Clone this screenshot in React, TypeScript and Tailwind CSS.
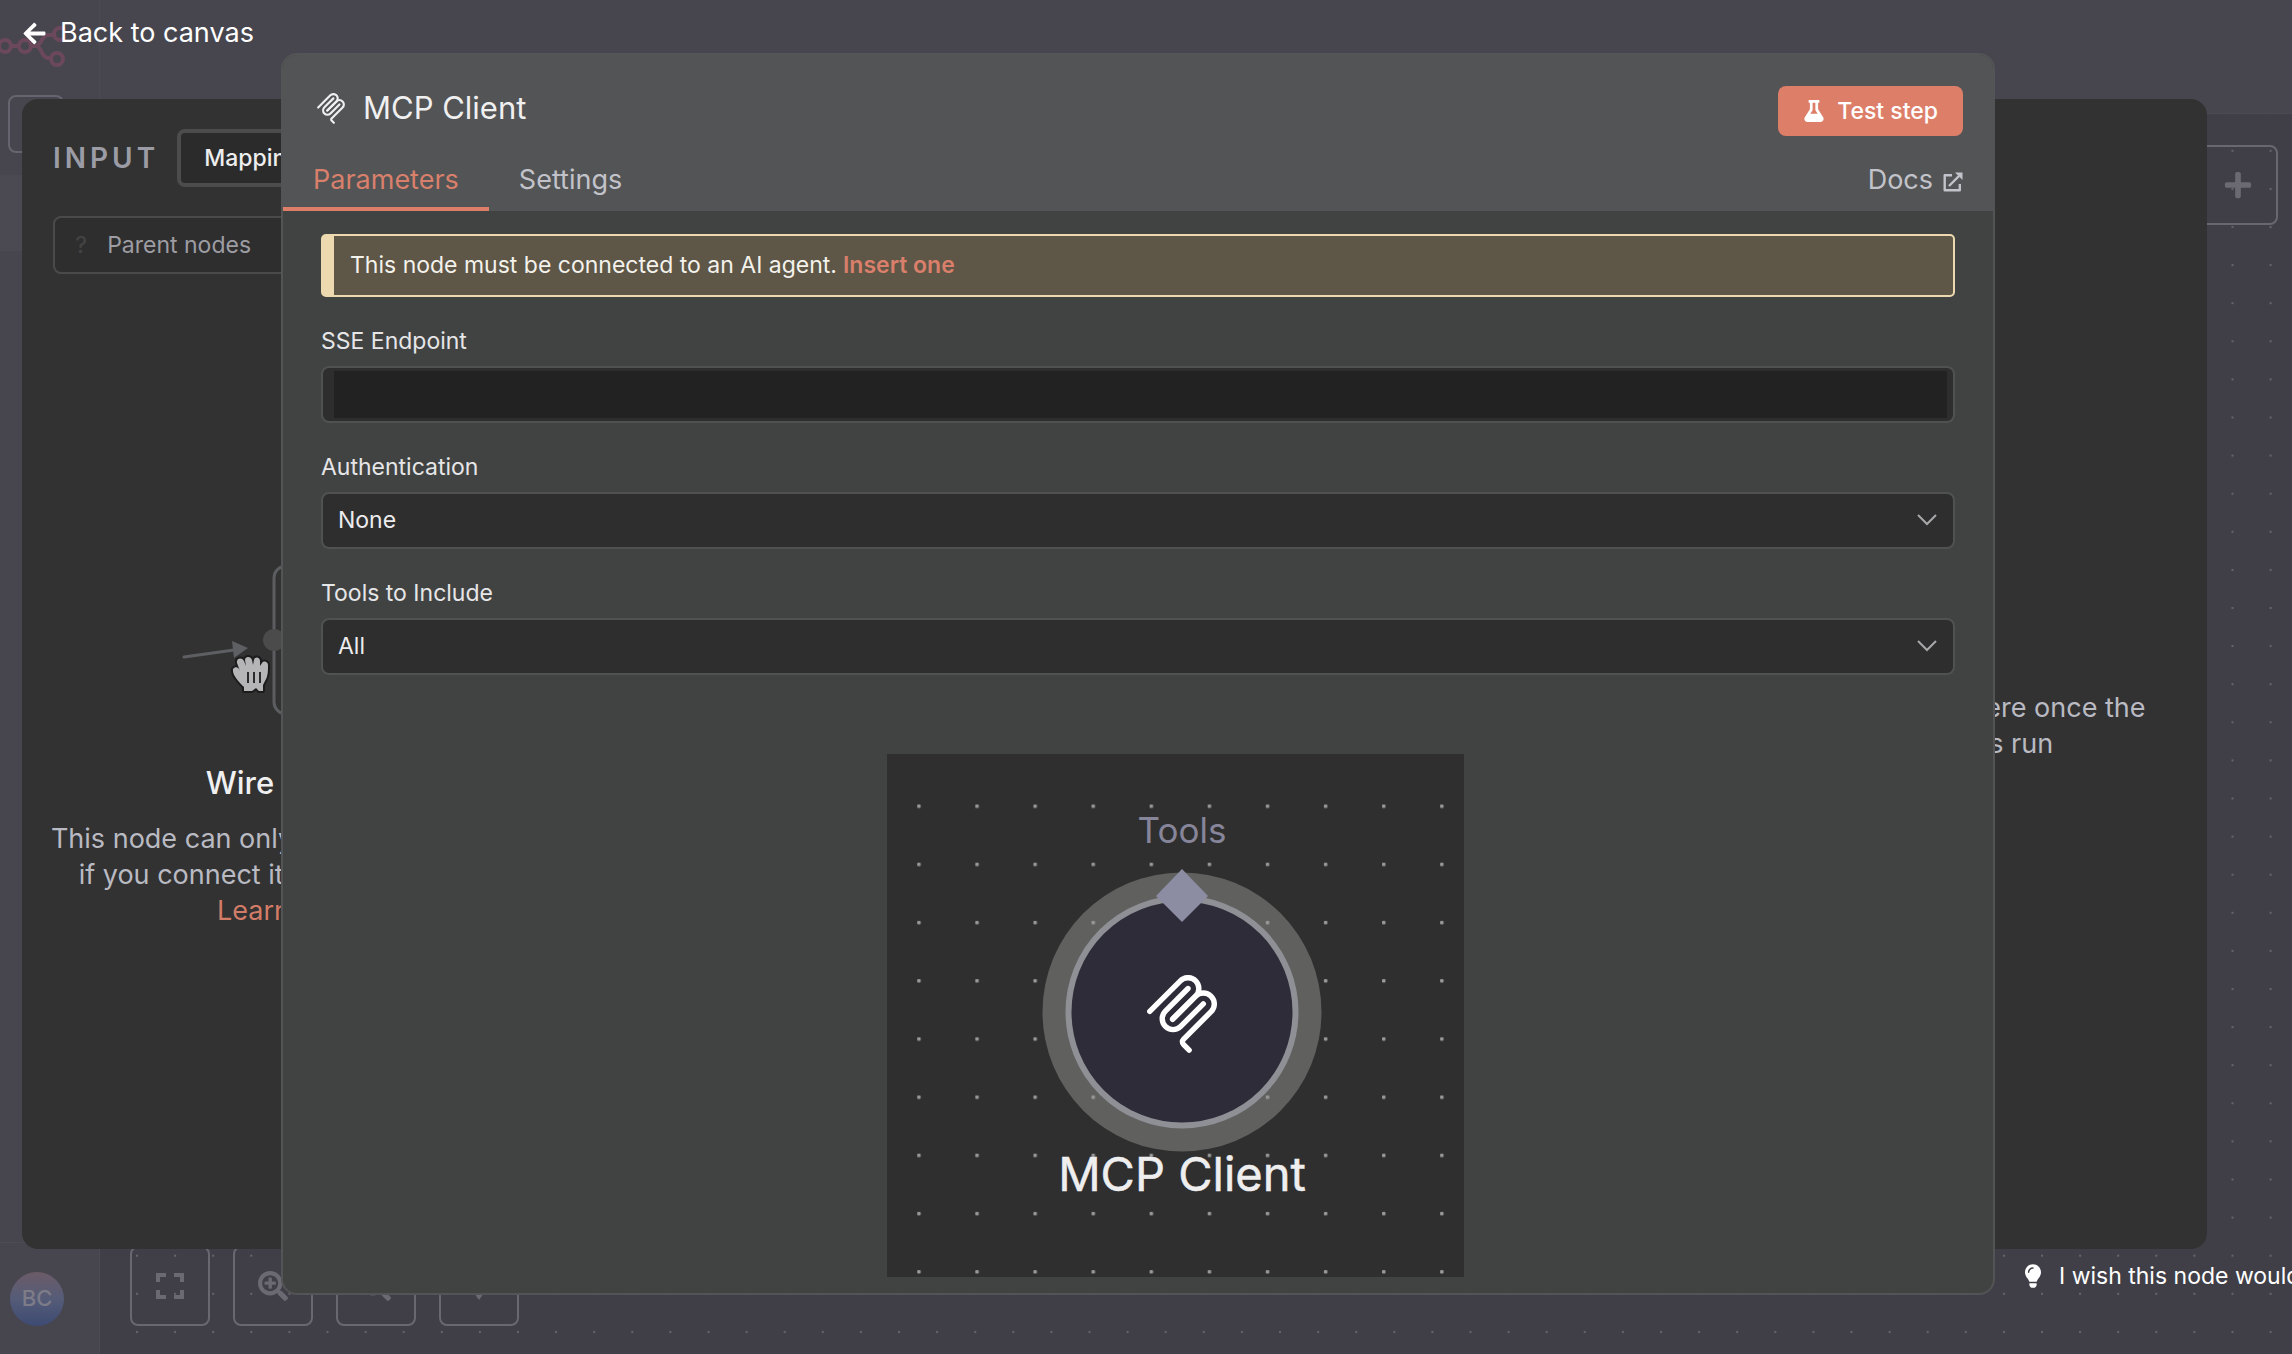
import type { ReactNode } from 'react'
import { FaArrowLeft, FaFlask, FaLightbulb, FaPlus, FaSearchMinus, FaSearchPlus } from 'react-icons/fa'

function McpIcon({ className }: { className: string }) {
  return (
    <svg viewBox="12 4 155 173" fill="none" stroke="currentColor" strokeWidth="12" strokeLinecap="round" className={className} aria-hidden="true">
      <path d="M18 84.8528L85.8822 16.9706C95.2548 7.59798 110.451 7.59798 119.823 16.9706C129.196 26.3431 129.196 41.5391 119.823 50.9117L68.5581 102.177" />
      <path d="M69.2652 101.47L119.823 50.9117C129.196 41.5391 144.392 41.5391 153.765 50.9117L154.118 51.2652C163.491 60.6378 163.491 75.8338 154.118 85.2063L92.7248 146.6C89.6006 149.724 89.6006 154.789 92.7248 157.913L105.331 170.52" />
      <path d="M102.853 33.9411L52.6482 84.1457C43.2756 93.5183 43.2756 108.714 52.6482 118.087C62.0208 127.459 77.2167 127.459 86.5893 118.087L136.794 67.8822" />
    </svg>
  )
}

function ExternalIcon() {
  return (
    <svg viewBox="0 0 20 20" fill="none" stroke="currentColor" strokeWidth="2.4" className="mt-1 size-5" aria-hidden="true">
      <path d="M9 3.2H1.7V18.3H16.8V12" strokeLinejoin="round" />
      <path d="M6 14L16 4" />
      <path d="M12 0.5H19.5V8Z" fill="currentColor" stroke="none" />
    </svg>
  )
}

function ExpandIcon() {
  return (
    <svg viewBox="0 0 28 28" fill="none" stroke="currentColor" strokeWidth="4" className="size-7" aria-hidden="true">
      <path d="M2 10V3H10M18 3H26V10M26 18V25H18M10 25H2V18" />
    </svg>
  )
}

function TidyIcon() {
  return (
    <svg viewBox="0 0 28 28" fill="currentColor" className="size-7" aria-hidden="true">
      <path d="M4 2H24V14L14 28L4 14Z" />
    </svg>
  )
}

function CanvasDots() {
  return (
    <svg className="absolute inset-0 size-full" aria-hidden="true">
      <defs>
        <pattern id="canvas-dots" x="36" y="35.8" width="38.1" height="38.1" patternUnits="userSpaceOnUse">
          <rect x="0" y="0" width="2" height="2" fill="#66656d" />
        </pattern>
      </defs>
      <rect width="100%" height="100%" fill="url(#canvas-dots)" />
    </svg>
  )
}

function CanvasButton({ label, children }: { label: string; children: ReactNode }) {
  return (
    <button type="button" aria-label={label} className="flex size-20 items-center justify-center rounded-lg border-2 border-[#696870] text-[#6b6a72]">
      {children}
    </button>
  )
}

function Workspace() {
  return (
    <div className="flex min-h-screen bg-[#403f48]">
      <aside className="flex w-[100px] shrink-0 flex-col justify-between border-r border-[#4b4a53] bg-[#47464f]">
        <div className="pt-6">
          <svg viewBox="0 0 66 54" fill="none" stroke="#6b485b" strokeWidth="4" className="h-[54px] w-[66px]" aria-hidden="true">
            <circle cx="5" cy="22" r="6" />
            <circle cx="25" cy="22" r="6" />
            <path d="M11 22H19M31 22H36C41 22 42 11 48 11H54M36 22C42 22 41 34 48 34H51" />
            <circle cx="60" cy="10" r="6" />
            <circle cx="57" cy="35" r="6" />
          </svg>
          <div className="mt-[17px] ml-2 h-[58px] w-14 rounded-lg border-2 border-[#66656f]" />
          <div className="mt-[22px] h-[76px] bg-[#4b4a52]" />
        </div>
        <div className="flex h-28 items-center border-t border-[#4d4c55] pl-[10px]">
          <div className="flex size-[54px] items-center justify-center rounded-full bg-linear-to-b from-[#6b5b68] via-[#555c78] to-[#3d4a72] text-[22px] font-medium text-[#7d7c88]">BC</div>
        </div>
      </aside>
      <div className="flex grow flex-col">
        <div className="h-[114px] border-b border-[#4b4a53] bg-[#47464f]" />
        <div className="relative flex grow flex-col items-end justify-between pt-[31px] pr-[14px] pb-7">
          <CanvasDots />
          <CanvasButton label="Add node">
            <FaPlus className="size-[30px]" />
          </CanvasButton>
          <div className="flex gap-[23px] self-start pl-[30px]">
            <CanvasButton label="Fit to view">
              <ExpandIcon />
            </CanvasButton>
            <CanvasButton label="Zoom in">
              <FaSearchPlus className="size-[30px]" />
            </CanvasButton>
            <CanvasButton label="Zoom out">
              <FaSearchMinus className="size-[30px]" />
            </CanvasButton>
            <CanvasButton label="Tidy up">
              <TidyIcon />
            </CanvasButton>
          </div>
        </div>
      </div>
    </div>
  )
}

function WireIllustration() {
  return (
    <svg viewBox="0 0 200 160" className="h-40 w-[200px] overflow-visible" fill="none" aria-hidden="true">
      <rect x="84" y="6" width="104" height="148" rx="12" stroke="#5c5d60" strokeWidth="3" />
      <circle cx="84" cy="80" r="11" fill="#4b4b4b" />
      <path d="M-6 97L44 90" stroke="#5e5f62" strokeWidth="3" strokeLinecap="round" />
      <path d="M42 81L58 88L44 98Z" fill="#5e5f62" />
      <path
        d="M43 109C45 106 49 107 50 111L47 103C46 98 52 97 54 101L56 106L55 100C55 96 61 96 62 100L63 105L64 100C65 96 70 97 70 101V106L72 103C74 100 78 102 78 105C78 112 78 116 75 121L73 125V131H69L66 128L62 131H54V127C49 122 42 115 43 109Z"
        fill="#b5b4b6"
        stroke="#1c1c1c"
        strokeWidth="4"
        strokeLinejoin="round"
        paintOrder="stroke"
      />
      <path d="M58 112V123M64 112V123M70 112V123" stroke="#2b2b2b" strokeWidth="2" />
    </svg>
  )
}

function InputPanel() {
  return (
    <section className="flex w-[536px] flex-col px-[31px] pt-[30px]">
      <div className="flex items-center gap-[18px]">
        <h2 className="text-[28px] font-semibold tracking-[4px] text-[#9b9ca5]">INPUT</h2>
        <div className="flex rounded-lg border-4 border-[#4c4c4c] bg-[#2b2b2b]">
          <button type="button" className="px-[23px] py-2 text-[23px] leading-[34px] font-medium text-[#eeeeef]">Mapping</button>
        </div>
      </div>
      <button type="button" className="mt-[29px] flex h-[58px] items-center gap-5 rounded-lg border-2 border-[#4a4a4a] bg-[#2e2e2e] pl-5 text-[23px] text-[#9d9da3]">
        <span className="font-medium text-[#434343]">?</span>
        Parent nodes
      </button>
      <div className="mt-[286px] flex flex-col items-center text-center">
        <WireIllustration />
        <h3 className="mt-[43px] text-[31px] leading-10 font-medium text-[#f0f0f1]">Wire me up</h3>
        <p className="mt-[18px] text-[27px] leading-9 whitespace-nowrap text-[#b9bac2]">
          This node can only receive input data
          <br />
          if you connect it to another node.
          <br />
          <a href="#learn" className="text-[#d37c68]">Learn more</a>
        </p>
      </div>
    </section>
  )
}

function OutputPanel() {
  return (
    <section className="flex w-[540px] items-center justify-center">
      <p className="pt-[103px] text-center text-[27px] leading-9 whitespace-nowrap text-[#b9bac2]">
        Output will appear here once the
        <br />
        parent node is run
      </p>
    </section>
  )
}

function SelectField({ id, label, value }: { id: string; label: string; value: string }) {
  return (
    <div className="flex flex-col gap-2">
      <label htmlFor={id} className="text-[23px] leading-[34px] text-[#e6e6e8]">{label}</label>
      <div className="relative">
        <select id={id} className="h-[57px] w-full appearance-none rounded-lg border-2 border-[#505151] bg-[#2e2e2e] px-[15px] text-[23px] text-[#ececee]">
          <option>{value}</option>
        </select>
        <svg viewBox="0 0 20 12" fill="none" stroke="#a8a8ac" strokeWidth="2" className="pointer-events-none absolute top-[22px] right-[18px] h-3 w-5" aria-hidden="true">
          <path d="M1 1L10 10L19 1" />
        </svg>
      </div>
    </div>
  )
}

function NodePreview() {
  return (
    <svg viewBox="0 0 577 523" className="h-[523px] w-[577px] bg-[#2f2f2f]" role="img" aria-label="MCP Client node">
      <defs>
        <pattern id="preview-dots" x="30.2" y="50.5" width="58.1" height="58.2" patternUnits="userSpaceOnUse">
          <rect width="3.5" height="3.5" rx="1" fill="#999999" />
        </pattern>
      </defs>
      <circle cx="295" cy="258" r="139.5" fill="#60615f" />
      <rect width="577" height="523" fill="url(#preview-dots)" />
      <circle cx="295" cy="258" r="113.5" fill="#2d2c38" stroke="#8f8f96" strokeWidth="6" />
      <path d="M295 115L321 142L295 168L269 142Z" fill="#8c8ca3" />
      <text x="295" y="89" textAnchor="middle" fontSize="35" fill="#86859a">Tools</text>
      <text x="295" y="437" textAnchor="middle" fontSize="47" fill="#eeeeef" stroke="#eeeeef" strokeWidth="0.5">MCP Client</text>
      <svg x="260" y="221" width="70" height="78" viewBox="12 4 155 173" fill="none" stroke="#ffffff" strokeWidth="12" strokeLinecap="round">
        <path d="M18 84.8528L85.8822 16.9706C95.2548 7.59798 110.451 7.59798 119.823 16.9706C129.196 26.3431 129.196 41.5391 119.823 50.9117L68.5581 102.177" />
        <path d="M69.2652 101.47L119.823 50.9117C129.196 41.5391 144.392 41.5391 153.765 50.9117L154.118 51.2652C163.491 60.6378 163.491 75.8338 154.118 85.2063L92.7248 146.6C89.6006 149.724 89.6006 154.789 92.7248 157.913L105.331 170.52" />
        <path d="M102.853 33.9411L52.6482 84.1457C43.2756 93.5183 43.2756 108.714 52.6482 118.087C62.0208 127.459 77.2167 127.459 86.5893 118.087L136.794 67.8822" />
      </svg>
    </svg>
  )
}

function NodeSettings() {
  return (
    <main className="absolute top-[53px] right-[297px] bottom-[59px] left-[281px] flex flex-col overflow-hidden rounded-2xl border-2 border-[#535455] bg-[#414342]">
      <header className="bg-[#535455]">
        <div className="flex items-start justify-between pt-[31px] pr-[30px] pl-[34px]">
          <div className="flex items-center gap-[18px]">
            <McpIcon className="h-[31px] w-7 text-[#f0f0f1]" />
            <h1 className="text-[31px] leading-[44px] text-[#f0f0f1]">MCP Client</h1>
          </div>
          <button type="button" className="flex h-[50px] items-center gap-3 rounded-lg bg-[#dd7e69] px-[25px] text-[23px] font-medium text-white">
            <FaFlask className="size-[22px]" />
            Test step
          </button>
        </div>
        <nav className="flex justify-between pr-[30px] text-[27px] leading-9 text-[#c2c3ca]">
          <div className="flex">
            <button type="button" className="flex h-[75px] items-center border-b-4 border-[#dd7e69] px-[30px] pt-4 text-[#d8806c]">Parameters</button>
            <button type="button" className="flex h-[75px] items-center border-b-4 border-transparent px-[30px] pt-4">Settings</button>
          </div>
          <a href="#docs" className="flex items-center gap-[10px] pt-3">
            Docs
            <ExternalIcon />
          </a>
        </nav>
      </header>
      <div className="flex flex-col px-[38px] pt-[23px]">
        <p className="flex h-[63px] items-center gap-[6px] rounded-[5px] border-2 border-l-[13px] border-[#ecd9b0] bg-[#5e5646] pl-4 text-[23px] text-[#f4f2ec]">
          This node must be connected to an AI agent.
          <a href="#insert" className="font-semibold text-[#d97f6b]">Insert one</a>
        </p>
        <form className="mt-[27px] flex flex-col gap-[27px]">
          <div className="flex flex-col gap-2">
            <label htmlFor="endpoint" className="text-[23px] leading-[34px] text-[#e6e6e8]">SSE Endpoint</label>
            <div className="flex h-[57px] rounded-lg border-2 border-[#505151] bg-[#2e2e2e] py-[3px] pr-[6px] pl-[11px]">
              <input id="endpoint" type="text" className="w-full bg-[#222222] text-[23px] text-[#ececee] outline-none" />
            </div>
          </div>
          <SelectField id="authentication" label="Authentication" value="None" />
          <SelectField id="tools" label="Tools to Include" value="All" />
        </form>
        <div className="mt-[79px] flex justify-center pl-[75px]">
          <NodePreview />
        </div>
      </div>
    </main>
  )
}

export default function App() {
  return (
    <div className="relative min-h-screen overflow-hidden font-[Inter,sans-serif]">
      <Workspace />
      <div className="absolute inset-0 flex flex-col pr-[85px] pl-[22px]">
        <div className="flex h-[99px] shrink-0 items-start pt-[17px]">
          <button type="button" className="flex items-center gap-[13px] text-[27px] leading-8 text-white">
            <FaArrowLeft className="size-[25px]" />
            Back to canvas
          </button>
        </div>
        <div className="flex grow justify-between rounded-2xl bg-[#323232]">
          <InputPanel />
          <OutputPanel />
        </div>
        <div className="flex h-[105px] shrink-0 justify-end">
          <button type="button" className="-mr-[85px] flex h-[54px] w-[267px] items-center gap-[18px] text-[23px] whitespace-nowrap text-white">
            <FaLightbulb className="h-6 w-4 shrink-0" />
            I wish this node would
          </button>
        </div>
      </div>
      <NodeSettings />
    </div>
  )
}
